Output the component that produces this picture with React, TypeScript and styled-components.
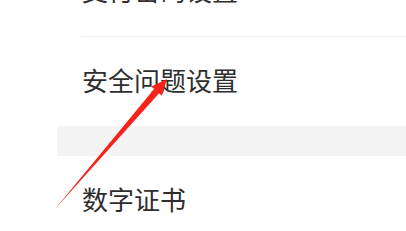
import React from "react";
import styled, { createGlobalStyle } from "styled-components";

const GlobalStyle = createGlobalStyle`
  html, body {
    margin: 0;
    padding: 0;
    background: #ffffff;
    overflow: hidden;
  }
  body {
    font-family: "Noto Sans CJK SC", "Noto Sans", sans-serif;
  }
`;

const Page = styled.div`
  position: relative;
  width: 406px;
  height: 231px;
  overflow: hidden;
  background: #ffffff;
`;

const List = styled.div`
  margin-top: -53px;
  margin-left: 57px;
  display: flex;
  flex-direction: column;
`;

const Group = styled.div`
  background: #ffffff;
  display: flex;
  flex-direction: column;
`;

const Spacer = styled.div`
  height: 30px;
  background: #f4f4f4;
`;

const Item = styled.div<{ $divider?: boolean }>`
  margin-left: 24px;
  height: 89px;
  display: flex;
  align-items: center;
  border-bottom: ${(p) => (p.$divider ? "1px solid #efefef" : "none")};
`;

const Label = styled.span`
  font-size: 26px;
  line-height: 1;
  color: #2e2e2e;
  padding-left: 1px;
  padding-bottom: 4px;
`;

const Arrow = styled.svg`
  position: absolute;
  left: 0;
  top: 0;
  pointer-events: none;
`;

const App = () => {
  return (
    <Page>
      <GlobalStyle />
      <List>
        <Group>
          <Item $divider>
            <Label>支付密码设置</Label>
          </Item>
          <Item>
            <Label>安全问题设置</Label>
          </Item>
        </Group>
        <Spacer />
        <Group>
          <Item>
            <Label>数字证书</Label>
          </Item>
        </Group>
      </List>
      <Arrow width="406" height="231" viewBox="0 0 406 231">
        <polygon
          points="55,209 154.1,88.9 151.3,86.5 167,79 161.9,95.7 159.1,93.3"
          fill="#f7231a"
        />
      </Arrow>
    </Page>
  );
};

export default App;
